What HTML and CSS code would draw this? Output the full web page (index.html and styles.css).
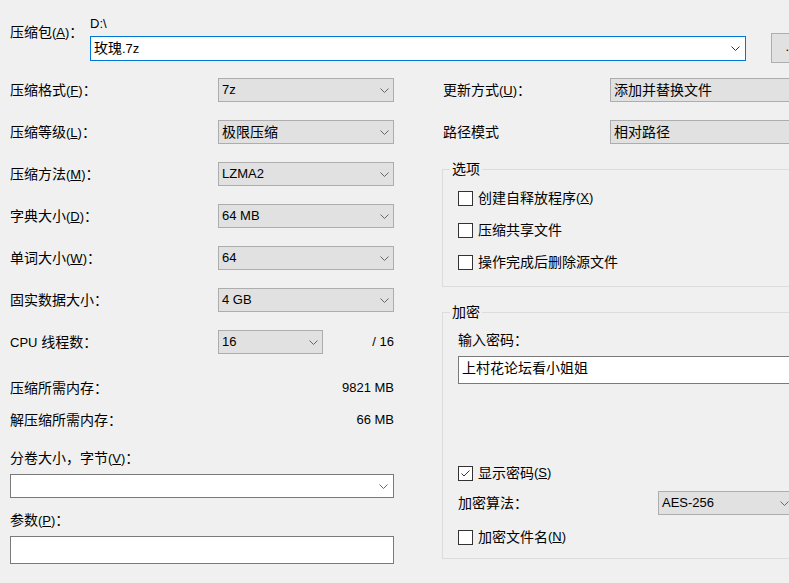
FILE: index.html
```html
<!DOCTYPE html>
<html lang="zh-CN">
<head>
    <meta charset="UTF-8">
    <title>添加到压缩包</title>
    <link rel="stylesheet" href="styles.css">
</head>
<body>
    <div class="path-row">
        <div class="path-label">压缩包<span class="l">(<u>A</u>)</span>：</div>
        <div class="path-col">
            <div class="path-dir l">D:\</div>
            <div class="combo focus">
                <span>玫瑰<span class="l">.7z</span></span>
                <svg class="chev" width="9" height="5" viewBox="0 0 9 5"><path d="M0.5 0.5 L4.5 4.5 L8.5 0.5" fill="none" stroke="#333"/></svg>
            </div>
        </div>
        <div class="browse l">...</div>
    </div>

    <div class="main">
        <div class="left">
            <div class="row">
                <div class="lbl">压缩格式<span class="l">(<u>F</u>)</span>：</div>
                <div class="sel"><span class="l">7z</span><svg class="chev" width="9" height="5" viewBox="0 0 9 5"><path d="M0.5 0.5 L4.5 4.5 L8.5 0.5" fill="none" stroke="#666"/></svg></div>
            </div>
            <div class="row">
                <div class="lbl">压缩等级<span class="l">(<u>L</u>)</span>：</div>
                <div class="sel"><span>极限压缩</span><svg class="chev" width="9" height="5" viewBox="0 0 9 5"><path d="M0.5 0.5 L4.5 4.5 L8.5 0.5" fill="none" stroke="#666"/></svg></div>
            </div>
            <div class="row">
                <div class="lbl">压缩方法<span class="l">(<u>M</u>)</span>：</div>
                <div class="sel"><span class="l">LZMA2</span><svg class="chev" width="9" height="5" viewBox="0 0 9 5"><path d="M0.5 0.5 L4.5 4.5 L8.5 0.5" fill="none" stroke="#666"/></svg></div>
            </div>
            <div class="row">
                <div class="lbl">字典大小<span class="l">(<u>D</u>)</span>：</div>
                <div class="sel"><span class="l">64 MB</span><svg class="chev" width="9" height="5" viewBox="0 0 9 5"><path d="M0.5 0.5 L4.5 4.5 L8.5 0.5" fill="none" stroke="#666"/></svg></div>
            </div>
            <div class="row">
                <div class="lbl">单词大小<span class="l">(<u>W</u>)</span>：</div>
                <div class="sel"><span class="l">64</span><svg class="chev" width="9" height="5" viewBox="0 0 9 5"><path d="M0.5 0.5 L4.5 4.5 L8.5 0.5" fill="none" stroke="#666"/></svg></div>
            </div>
            <div class="row">
                <div class="lbl">固实数据大小：</div>
                <div class="sel"><span class="l">4 GB</span><svg class="chev" width="9" height="5" viewBox="0 0 9 5"><path d="M0.5 0.5 L4.5 4.5 L8.5 0.5" fill="none" stroke="#666"/></svg></div>
            </div>
            <div class="row">
                <div class="lbl"><span class="l">CPU</span> 线程数：</div>
                <div class="sel short"><span class="l">16</span><svg class="chev" width="9" height="5" viewBox="0 0 9 5"><path d="M0.5 0.5 L4.5 4.5 L8.5 0.5" fill="none" stroke="#666"/></svg></div>
                <div class="max l">/ 16</div>
            </div>

            <div class="info first">
                <span>压缩所需内存：</span>
                <span class="l">9821 MB</span>
            </div>
            <div class="info">
                <span>解压缩所需内存：</span>
                <span class="l">66 MB</span>
            </div>

            <div class="field-label vol">分卷大小，字节<span class="l">(<u>V</u>)</span>：</div>
            <div class="combo vol-box">
                <span></span>
                <svg class="chev" width="9" height="5" viewBox="0 0 9 5"><path d="M0.5 0.5 L4.5 4.5 L8.5 0.5" fill="none" stroke="#666"/></svg>
            </div>
            <div class="field-label">参数<span class="l">(<u>P</u>)</span>：</div>
            <div class="text-box"></div>
        </div>

        <div class="right">
            <div class="row">
                <div class="lbl-r">更新方式<span class="l">(<u>U</u>)</span>：</div>
                <div class="sel wide"><span>添加并替换文件</span></div>
            </div>
            <div class="row">
                <div class="lbl-r">路径模式</div>
                <div class="sel wide"><span>相对路径</span></div>
            </div>

            <fieldset class="group opts">
                <legend>选项</legend>
                <div class="check"><span class="box"></span>创建自释放程序<span class="l">(<u>X</u>)</span></div>
                <div class="check">
                    <span class="box"></span>压缩共享文件
                </div>
                <div class="check"><span class="box"></span>操作完成后删除源文件</div>
            </fieldset>

            <fieldset class="group enc">
                <legend>加密</legend>
                <div class="pw-label">输入密码：</div>
                <div class="pw-box">上村花论坛看小姐姐</div>
                <div class="check show-pw">
                    <span class="box"><svg width="13" height="13" viewBox="0 0 13 13"><path d="M2.5 6.5 L5 9 L10.5 3.5" fill="none" stroke="#333"/></svg></span>显示密码<span class="l">(<u>S</u>)</span>
                </div>
                <div class="algo">
                    <div class="lbl-a">加密算法：</div>
                    <div class="sel algo-sel"><span class="l">AES-256</span><svg class="chev" width="9" height="5" viewBox="0 0 9 5"><path d="M0.5 0.5 L4.5 4.5 L8.5 0.5" fill="none" stroke="#666"/></svg></div>
                </div>
                <div class="check enc-names"><span class="box"></span>加密文件名<span class="l">(<u>N</u>)</span></div>
            </fieldset>
        </div>
    </div>
</body>
</html>
```

FILE: styles.css
```css
* {
    box-sizing: border-box;
}
html, body {
    margin: 0;
}
body {
    width: 789px;
    height: 583px;
    overflow: hidden;
    background-color: #f0f0f0;
    font-family: "Liberation Sans", "Noto Sans CJK SC", sans-serif;
    font-size: 14px;
    color: #000;
}
.l {
    font-size: 13px;
}
.chev {
    flex: none;
}

/* top: archive path */
.path-row {
    display: flex;
    padding: 17px 0 0 10px;
}
.path-label {
    flex: none;
    width: 80px;
    margin-top: 8px;
    line-height: 14px;
}
.path-col {
    flex: none;
    width: 656px;
}
.path-dir {
    height: 14px;
    line-height: 14px;
    margin-bottom: 5px;
}
.combo {
    display: flex;
    align-items: center;
    justify-content: space-between;
    height: 25px;
    padding: 0 5px 0 3px;
    border: 1px solid #7a7a7a;
    background-color: #fff;
    line-height: 20px;
}
.combo.focus {
    border-color: #0078d7;
}
.browse {
    flex: none;
    width: 40px;
    height: 30px;
    margin: 16px 0 0 25px;
    border: 1px solid #adadad;
    background-color: #e1e1e1;
    text-align: center;
    line-height: 26px;
}

/* two columns */
.main {
    display: flex;
    margin-top: 15px;
    padding-left: 10px;
}
.left {
    flex: none;
    width: 384px;
}
.right {
    flex: none;
    width: 420px;
    margin-left: 48px;
}
.row {
    display: flex;
    align-items: center;
    height: 24px;
    line-height: 20px;
}
.row + .row {
    margin-top: 18px;
}
.lbl {
    width: 208px;
}
.lbl-r {
    width: 168px;
    padding-left: 1px;
}
.sel {
    display: flex;
    align-items: center;
    justify-content: space-between;
    width: 176px;
    height: 24px;
    padding: 0 4px 0 3px;
    border: 1px solid #adadad;
    background-color: #e1e1e1;
}
.sel.short {
    width: 105px;
}
.sel.wide {
    width: 240px;
}
.max {
    margin-left: auto;
}
.info {
    display: flex;
    justify-content: space-between;
    height: 20px;
    line-height: 20px;
    margin-top: 12px;
}
.info.first {
    margin-top: 24px;
}
.field-label {
    height: 20px;
    line-height: 20px;
    margin-top: 12px;
}
.field-label.vol {
    margin-top: 18px;
}
.vol-box {
    height: 24px;
    margin-top: 6px;
}
.text-box {
    height: 28px;
    margin-top: 6px;
    border: 1px solid #7a7a7a;
    background-color: #fff;
}

/* group boxes */
.group {
    margin: 17px 0 0 0;
    padding: 11px 0 14px 15px;
    border: 1px solid #dcdcdc;
    min-width: 0;
}
.group legend {
    margin-left: -8px;
    padding: 0 2px;
    line-height: 16px;
}
.enc {
    padding: 10px 0 11px 15px;
}
.check {
    display: flex;
    align-items: center;
    height: 20px;
    line-height: 20px;
}
.check + .check {
    margin-top: 12px;
}
.box {
    flex: none;
    width: 15px;
    height: 15px;
    margin-right: 5px;
    border: 1px solid #333;
    background-color: #fff;
}
.box svg {
    display: block;
}
.pw-label {
    height: 20px;
    line-height: 20px;
}
.pw-box {
    height: 28px;
    margin-top: 6px;
    padding-left: 3px;
    border: 1px solid #7a7a7a;
    background-color: #fff;
    line-height: 22px;
}
.check.show-pw {
    margin-top: 79px;
}
.algo {
    display: flex;
    align-items: center;
    height: 24px;
    margin-top: 8px;
    line-height: 20px;
}
.lbl-a {
    width: 200px;
}
.algo-sel {
    width: 136px;
}
.check.enc-names {
    margin-top: 12px;
}
```
